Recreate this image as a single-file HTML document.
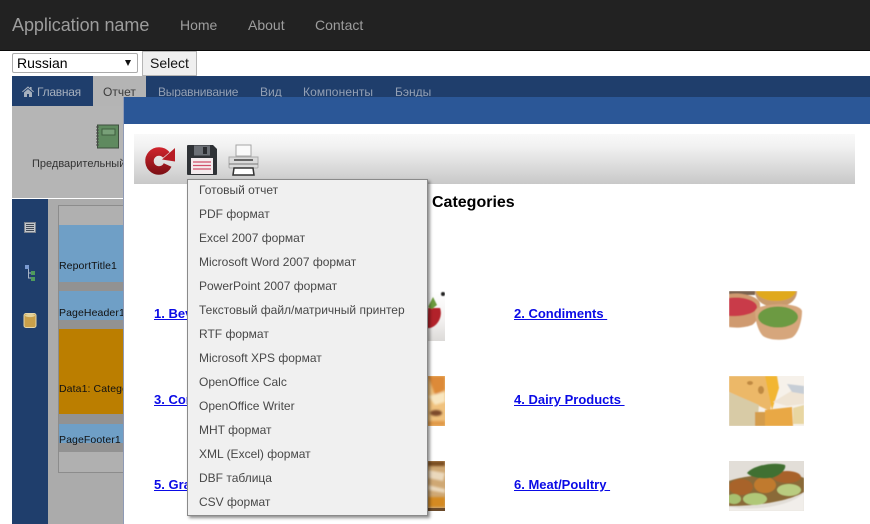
<!DOCTYPE html>
<html><head><meta charset="utf-8"><title>Report</title>
<style>
html,body{margin:0;padding:0;background:#fff}
body{width:870px;height:524px;position:relative;overflow:hidden;font-family:"Liberation Sans",Arial,sans-serif}
.a{position:absolute;white-space:nowrap}
.nv{color:#9d9d9d;font-size:14px;line-height:20px;top:15px}
.tab{font-size:12px;line-height:16px;top:84px;color:#93a0b5}
.bl{left:59px;width:65px;background:#6f9fc6}
.gr{left:59px;width:65px;background:#929292}
.bt{left:59px;font-size:10.5px;line-height:14px;color:#111;letter-spacing:.1px}
.m{left:199px;font-size:12px;line-height:16px;color:#484848}
.lk{font-size:13px;font-weight:bold;color:#0a0ae6;text-decoration:underline;line-height:16px}
</style></head><body>
<div class="a" style="left:0;top:0;width:870px;height:50px;background:#222;border-bottom:1px solid #0a0a0a"></div>
<div class="a" style="left:12px;top:15px;font-size:18px;line-height:20px;color:#9d9d9d;letter-spacing:-.05px">Application name</div>
<div class="a nv" style="left:180px">Home</div>
<div class="a nv" style="left:248px">About</div>
<div class="a nv" style="left:315px">Contact</div>

<div class="a" style="left:12px;top:53px;width:124px;height:18px;border:1px solid #ababab;border-radius:2px;background:#fff"></div>
<div class="a" style="left:17px;top:55px;font-size:14px;line-height:16px;color:#000">Russian</div>
<div class="a" style="left:125px;top:60px;width:0;height:0;border-left:3.5px solid transparent;border-right:3.5px solid transparent;border-top:6px solid #111"></div>
<div class="a" style="left:142px;top:51px;width:53px;height:23px;border:1px solid #b5b5b5;background:#efefef"></div>
<div class="a" style="left:150px;top:55px;font-size:14px;line-height:16px;color:#111">Select</div>

<div class="a" style="left:12px;top:76px;width:858px;height:30px;background:#1f3e6c"></div>
<div class="a" style="left:93px;top:76px;width:53px;height:30px;background:#b4b4b4"></div>
<svg class="a" style="left:22px;top:86px" width="12" height="11" viewBox="0 0 12 11"><path d="M0 5.600 6 .4l2 1.700V1h1.600v2.500L12 5.600l-.7.7L6 1.900.7 6.300zM2 6.500 6 3l4 3.500V11H7V8H5v3H2z" fill="#a5afbd"/></svg>
<div class="a tab" style="left:37px;color:#a5afbd;letter-spacing:-.25px">Главная</div>
<div class="a tab" style="left:103px;color:#3c3c3c">Отчет</div>
<div class="a tab" style="left:158px;letter-spacing:-.2px">Выравнивание</div>
<div class="a tab" style="left:260px">Вид</div>
<div class="a tab" style="left:303px;letter-spacing:.1px">Компоненты</div>
<div class="a tab" style="left:395px">Бэнды</div>

<div class="a" style="left:12px;top:106px;width:112px;height:92px;background:#b5b5b5"></div>
<svg class="a" style="left:95px;top:124px" width="25" height="26" viewBox="0 0 25 26">
<rect x="2.500" y="1" width="21" height="23" fill="#5f8a5f" stroke="#3d4f3d"/>
<rect x="7" y="5" width="13" height="6" fill="#78a078" stroke="#3f5f3f"/>
<path d="M1 3h3M1 6h3M1 9h3M1 12h3M1 15h3M1 18h3M1 21h3" stroke="#4a4a4a" stroke-width="1"/>
</svg>
<div class="a" style="left:32px;top:157px;font-size:11px;line-height:14px;color:#333;">Предварительный</div>

<div class="a" style="left:12px;top:199px;width:36px;height:325px;background:#1f3e6c"></div>
<div class="a" style="left:48px;top:199px;width:76px;height:325px;background:#ababab"></div>
<svg class="a" style="left:24px;top:222px" width="12" height="11" viewBox="0 0 12 11"><rect x=".5" y=".5" width="11" height="10" fill="#c3c7cc" stroke="#7d8590"/><path d="M2 2.500h8M2 4.500h8M2 6.500h8M2 8.500h8" stroke="#3f4855"/></svg>
<svg class="a" style="left:24px;top:264px" width="13" height="18" viewBox="0 0 13 18"><rect x="1" y="1" width="4" height="4" fill="#7a9ad0"/><path d="M4.500 5v9h3M4.500 9h3" stroke="#a8b4c4" fill="none"/><rect x="7" y="7" width="4" height="4" fill="#4f9a5c"/><rect x="7" y="13" width="4" height="4" fill="#4f9a5c"/></svg>
<svg class="a" style="left:23px;top:312px" width="14" height="17" viewBox="0 0 14 17"><rect x="1" y="1.500" width="12" height="14" rx="2" fill="#c9a04a" stroke="#e5d6a8"/><ellipse cx="7" cy="3.500" rx="5" ry="1.600" fill="#e3d29a"/></svg>

<div class="a" style="left:58px;top:205px;width:66px;height:266px;border:1px solid #8c8c8c;border-right:0;background:#b0b0b0"></div>
<div class="a bl" style="top:225px;height:57px"></div>
<div class="a gr" style="top:282px;height:9px"></div>
<div class="a bl" style="top:291px;height:29px"></div>
<div class="a gr" style="top:320px;height:9px"></div>
<div class="a" style="left:59px;top:329px;width:65px;height:85px;background:#bb7e00"></div>
<div class="a gr" style="top:414px;height:10px"></div>
<div class="a bl" style="top:424px;height:19px"></div>
<div class="a gr" style="top:443px;height:9px"></div>
<div style="position:absolute;left:0;top:0;width:124px;height:524px;overflow:hidden">
<div class="a bt" style="top:259px">ReportTitle1</div>
<div class="a bt" style="top:306px">PageHeader1</div>
<div class="a bt" style="top:382px">Data1: Categories</div>
<div class="a bt" style="top:433px">PageFooter1</div>
</div>

<div class="a" style="left:123px;top:97px;width:1px;height:427px;background:#8f9ab5"></div>
<div class="a" style="left:124px;top:97px;width:746px;height:427px;background:#fff"></div>
<div class="a" style="left:124px;top:97px;width:746px;height:27px;background:#2b5797"></div>
<div class="a" style="left:134px;top:134px;width:721px;height:50px;background:linear-gradient(#f9f9f9 0%,#f1f1f1 25%,#d6d6d6 75%,#c8c8c8 100%)"></div>

<svg class="a" style="left:144px;top:143px" width="33" height="33" viewBox="0 0 33 33">
<defs><linearGradient id="r" gradientUnits="userSpaceOnUse" x1="0" y1="3" x2="0" y2="32"><stop offset="0" stop-color="#d4252e"/><stop offset="1" stop-color="#7a0f14"/></linearGradient></defs>
<path d="M23.600 22A9.500 9.500 0 1 1 22.300 11.900" fill="none" stroke="url(#r)" stroke-width="8.500"/>
<path d="M31 5V18.500L18 16.500z" fill="#b71c24"/>
</svg>
<svg class="a" style="left:186px;top:144px" width="32" height="32" viewBox="0 0 32 32">
<path d="M2 1h25l4 4v25a1 1 0 0 1-1 1H2a1 1 0 0 1-1-1V2a1 1 0 0 1 1-1z" fill="#2f3236"/>
<rect x="8" y="1.500" width="16" height="10" fill="#6c7076"/><rect x="17" y="3" width="4" height="7" fill="#2a2c30"/>
<rect x="5" y="14" width="22" height="16" fill="#f4ecee"/>
<path d="M7 18h18M7 21.500h18M7 25h18" stroke="#d0506a" stroke-width="1.200"/>
</svg>
<svg class="a" style="left:227px;top:144px" width="33" height="33" viewBox="0 0 33 33">
<path d="M9 1h15v11H9z" fill="#fafafa" stroke="#a5a5a5"/>
<path d="M2 13h29v10a1 1 0 0 1-1 1H3a1 1 0 0 1-1-1z" fill="#dadada" stroke="#aaa"/>
<rect x="7" y="15" width="19" height="2" fill="#666"/>
<path d="M2 20h29" stroke="#777" stroke-width="1"/>
<path d="M7 24h19l1 7H6z" fill="#fff" stroke="#333" stroke-width="1.500"/>
</svg>

<div class="a" style="left:432px;top:194px;font-size:16px;font-weight:bold;line-height:18px;color:#000">Categories</div>

<a class="a lk" style="left:154px;top:306px">1. Beverages&nbsp;</a>
<a class="a lk" style="left:154px;top:392px">3. Confections&nbsp;</a>
<a class="a lk" style="left:154px;top:477px">5. Grains/Cereals&nbsp;</a>
<a class="a lk" style="left:514px;top:306px">2. Condiments&nbsp;</a>
<a class="a lk" style="left:514px;top:392px">4. Dairy Products&nbsp;</a>
<a class="a lk" style="left:514px;top:477px">6. Meat/Poultry&nbsp;</a>

<!-- left images -->
<svg class="a" style="left:370px;top:291px" width="75" height="50" viewBox="0 0 75 50"><defs><filter id="b1"><feGaussianBlur stdDeviation=".6"/></filter><linearGradient id="g1" x1="0" y1="0" x2="0" y2="1"><stop offset="0" stop-color="#fff"/><stop offset=".6" stop-color="#f2f0ef"/><stop offset="1" stop-color="#dcdad8"/></linearGradient></defs><rect width="75" height="50" fill="url(#g1)"/><g filter="url(#b1)"><path d="M58 17l12 0c3 8-2 18-10 20l-3 0z" fill="#b2242c"/><path d="M58 16l5-10 4 8-5 4z" fill="#6c9a3c"/><circle cx="73" cy="3" r="2" fill="#222"/></g></svg>
<svg class="a" style="left:370px;top:376px" width="75" height="50" viewBox="0 0 75 50"><defs><filter id="b2"><feGaussianBlur stdDeviation="1"/></filter></defs><rect width="75" height="50" fill="#f0c27e"/><g filter="url(#b2)"><path d="M58 0h17v14l-10 5z" fill="#dd8a38"/><path d="M58 20l17-4v10l-10 3z" fill="#f8e6c0"/><ellipse cx="66" cy="37" rx="6" ry="3" fill="#7c4a2a"/><path d="M58 45h17v5H58z" fill="#e09a48"/></g></svg>
<svg class="a" style="left:370px;top:461px" width="75" height="50" viewBox="0 0 75 50"><defs><filter id="b3"><feGaussianBlur stdDeviation="1"/></filter></defs><rect width="75" height="50" fill="#cfa874"/><g filter="url(#b3)"><path d="M58 0h17v5H58z" fill="#7a4e22"/><path d="M58 9l17 3-2 8-15-3zM58 24l17 4v4l-17-3z" fill="#ead8bc"/><path d="M58 36h17v10H58z" fill="#d48a24"/></g><rect y="47" width="75" height="3" fill="#6a4a2a"/></svg>

<!-- right images -->
<svg class="a" style="left:729px;top:291px" width="75" height="50" viewBox="0 0 75 50"><defs><filter id="b4"><feGaussianBlur stdDeviation=".6"/></filter></defs><g filter="url(#b4)">
<path d="M0 0h26v4H0z" fill="#7a6250"/>
<path d="M26 0h42c0 9-8 16-21 16S26 9 26 0z" fill="#c89a6c"/><path d="M27 0h40c-1 6-9 10-20 10S28 6 27 0z" fill="#e0a91c"/>
<path d="M0 3c12-2 30 2 31 10 1 10-4 19-8 21-8 3-17 3-23 2z" fill="#cf9a70"/><path d="M0 7c12-2 28 2 28 9 0 6-14 10-28 9z" fill="#c93a48"/>
<path d="M26 20c2-8 44-10 47 0 0 12-5 25-11 27-10 3-22 2-28-2-5-5-8-16-8-25z" fill="#d6a67c"/>
<ellipse cx="49" cy="26" rx="20" ry="10.500" fill="#6c9a42"/></g></svg>
<svg class="a" style="left:729px;top:376px" width="75" height="50" viewBox="0 0 75 50"><defs><filter id="b5"><feGaussianBlur stdDeviation=".5"/></filter></defs><rect width="75" height="50" fill="#f6f1ea"/><g filter="url(#b5)">
<path d="M0 0h41l3 20-3 15L0 16z" fill="#ecb868"/><path d="M36 0h12l2 12-7 22z" fill="#f2b632"/>
<ellipse cx="21" cy="7" rx="3" ry="2" fill="#c08a42"/><ellipse cx="32" cy="14" rx="3" ry="4" fill="#c08a42"/>
<path d="M0 16l30 13-2 21H0z" fill="#d8cba6"/>
<path d="M36 34l27-3 1 19H36z" fill="#e9a844"/><path d="M26 36h10v14H26z" fill="#d49c4c"/>
<path d="M44 26l20-12 11 4v10l-17 2z" fill="#efe4d4"/><path d="M58 8l17 2v8l-12-2z" fill="#c7ced6"/><path d="M64 32l11-3v19H64z" fill="#e8d6a2"/></g></svg>
<svg class="a" style="left:729px;top:461px" width="75" height="50" viewBox="0 0 75 50"><defs><filter id="b6"><feGaussianBlur stdDeviation=".6"/></filter></defs><rect width="75" height="50" fill="#e2ded8"/><g filter="url(#b6)">
<path d="M0 46c25 4 60 0 75-14v18H0z" fill="#f1eeea"/>
<path d="M0 20c15-6 60-10 75-3v14c-15 9-45 14-75 14z" fill="#8a6a38"/>
<ellipse cx="12" cy="26" rx="12" ry="8" fill="#a8642a"/><ellipse cx="36" cy="24" rx="11" ry="8" fill="#c07a2e"/><ellipse cx="58" cy="16" rx="14" ry="6" fill="#a8622a"/>
<path d="M18 12c8-9 30-11 38-8 2 5-8 13-15 13-8 1-18 0-23-5z" fill="#3f7030"/>
<ellipse cx="26" cy="38" rx="12" ry="6" fill="#b0c878"/><ellipse cx="60" cy="29" rx="12" ry="6" fill="#b9cc80"/><ellipse cx="5" cy="38" rx="7" ry="5" fill="#a8c070"/></g></svg>

<!-- menu -->
<div class="a" style="left:187px;top:179px;width:239px;height:335px;background:#f0f0f0;border:1px solid #8a8a8a;box-shadow:2px 2px 3px rgba(0,0,0,.45)"></div>
<div class="a m" style="top:182px">Готовый отчет</div>
<div class="a m" style="top:206px">PDF формат</div>
<div class="a m" style="top:230px">Excel 2007 формат</div>
<div class="a m" style="top:254px">Microsoft Word 2007 формат</div>
<div class="a m" style="top:278px">PowerPoint 2007 формат</div>
<div class="a m" style="top:302px">Текстовый файл/матричный принтер</div>
<div class="a m" style="top:326px">RTF формат</div>
<div class="a m" style="top:350px">Microsoft XPS формат</div>
<div class="a m" style="top:374px">OpenOffice Calc</div>
<div class="a m" style="top:398px">OpenOffice Writer</div>
<div class="a m" style="top:422px">MHT формат</div>
<div class="a m" style="top:446px">XML (Excel) формат</div>
<div class="a m" style="top:470px">DBF таблица</div>
<div class="a m" style="top:494px">CSV формат</div>
</body></html>
